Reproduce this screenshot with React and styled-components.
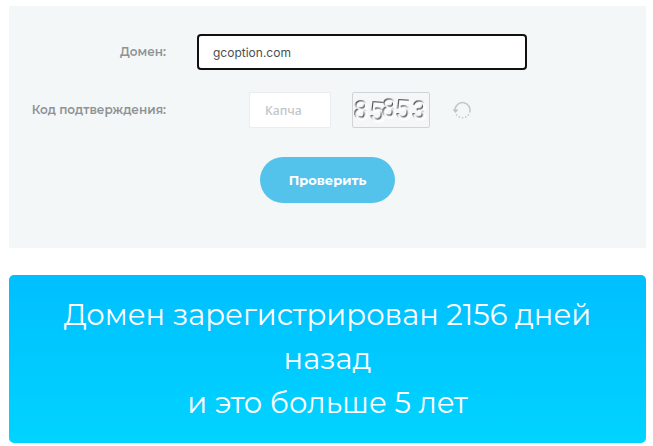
import React, { useState } from 'react';
import styled, { createGlobalStyle } from 'styled-components';

const GlobalStyle = createGlobalStyle`
  * {
    box-sizing: border-box;
  }
  body {
    margin: 0;
    background: #fff;
    font-family: Montserrat, Inter, 'Open Sans', sans-serif;
  }
`;

const Page = styled.main`
  padding: 6px 7px 3px 9px;
`;
const Form = styled.form`
  display: flex;
  flex-direction: column;
  gap: 22px;
  padding: 28px 0 45px;
  background: #f3f7f8;
`;
const Row = styled.div`
  display: grid;
  grid-template-columns: 142px 1fr;
  column-gap: 31px;
  align-items: center;
  padding: 0 119px 0 15px;
`;
const Label = styled.label`
  color: #8f9294;
  font-size: 12px;
  font-weight: 600;
  line-height: 14px;
  text-align: right;
  white-space: nowrap;
`;
const Input = styled.input`
  height: 36px;
  min-width: 0;
  padding: 0 15px;
  border: 1px solid #e9edef;
  border-radius: 2px;
  background: #fff;
  color: #4a4e52;
  font-family: Inter, sans-serif;
  font-size: 12px;
  outline: none;

  &::placeholder {
    color: #c3c7ca;
    opacity: 1;
  }
`;
const DomainInput = styled(Input)`
  width: 100%;
  padding: 0 14px;
  border: 2px solid #101010;
  border-radius: 4px;
`;
const CodeInput = styled(Input)`
  width: 82px;
  font-family: 'Open Sans', sans-serif;
  font-weight: 600;
`;
const CodeGroup = styled.div`
  display: flex;
  align-items: center;
  justify-content: center;
  gap: 21px;
  padding-right: 4px;
`;
const CaptchaPicture = styled.svg`
  width: 78px;
  height: 36px;
  border: 1px solid #d0d4d6;
  border-radius: 2px;
`;
const Digit = styled.text`
  fill: #f9fbfc;
  font-family: 'Liberation Sans', sans-serif;
  filter: drop-shadow(-1px -1px 0 #444) drop-shadow(1px 1px 0 #fff);
`;
const Reload = styled.button`
  display: flex;
  padding: 0;
  border: 0;
  background: none;
  cursor: pointer;
`;
const Submit = styled.button`
  align-self: center;
  height: 46px;
  margin-top: 7px;
  padding: 0 29px;
  border: 0;
  border-radius: 23px;
  background: #54c3ec;
  color: #fff;
  font-family: inherit;
  font-size: 13px;
  font-weight: 700;
  cursor: pointer;
`;
const Result = styled.div`
  margin-top: 27px;
  padding: 18px 36px;
  border-radius: 5px;
  background: linear-gradient(#00bfff, #00d4ff);
  color: #fff;
  font-size: 29px;
  line-height: 44px;
  text-align: center;
`;

const digits = [
  { char: '8', x: 1, y: 26, size: 25, turn: 3 },
  { char: '5', x: 17, y: 28, size: 27, turn: 4 },
  { char: '8', x: 29, y: 24, size: 25, turn: 4 },
  { char: '5', x: 43, y: 26, size: 27, turn: 3 },
  { char: '3', x: 59, y: 26, size: 25, turn: 4 }
];

function Captcha() {
  return (
    <CaptchaPicture viewBox="0 0 76 34" aria-label="Капча">
      {digits.map((digit, i) => (
        <Digit
            key={ i }
            x={ digit.x }
            y={ digit.y }
            fontSize={ digit.size }
            transform={ `rotate(${digit.turn} ${digit.x} ${digit.y})` }>
          { digit.char }
        </Digit>
      ))}
    </CaptchaPicture>
  );
}

function ReloadIcon() {
  return (
    <svg width="20" height="20" viewBox="-3 0 20 20" fill="none" aria-hidden="true">
      <path d="M1 10a7.500 7.500 0 1 1 14.600 2.500" stroke="#c3c7c9" strokeWidth="1.500" />
      <path d="M14.800 14.300A7.500 7.500 0 0 1 2 14" stroke="#c3c7c9" strokeWidth="1.500" strokeDasharray="1.500 1.800" />
      <path d="M-1.500 9.500h6L1.500 13z" fill="#bfc3c5" />
    </svg>
  );
}

export default function App() {
  const [domain, setDomain] = useState('gcoption.com');
  const [code, setCode] = useState('');

  return (
    <>
      <GlobalStyle />
      <Page>
        <Form onSubmit={ e => e.preventDefault() }>
          <Row>
            <Label htmlFor="domain">Домен:</Label>
            <DomainInput
                id="domain"
                value={ domain }
                onChange={ e => setDomain(e.target.value) } />
          </Row>
          <Row>
            <Label htmlFor="code">Код подтверждения:</Label>
            <CodeGroup>
              <CodeInput
                  id="code"
                  placeholder="Капча"
                  value={ code }
                  onChange={ e => setCode(e.target.value) } />
              <Captcha />
              <Reload type="button" aria-label="Обновить">
                <ReloadIcon />
              </Reload>
            </CodeGroup>
          </Row>
          <Submit type="submit">Проверить</Submit>
        </Form>

        <Result>
          Домен зарегистрирован 2156 дней назад
          <br />
          и это больше 5 лет
        </Result>
      </Page>
    </>
  );
}
